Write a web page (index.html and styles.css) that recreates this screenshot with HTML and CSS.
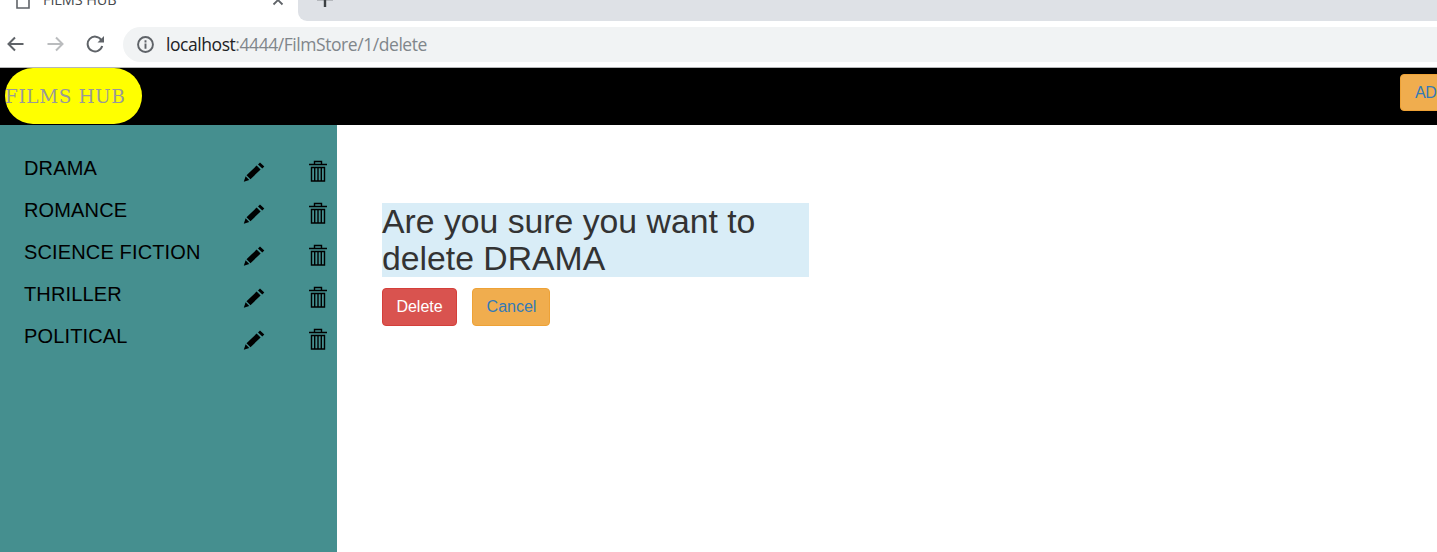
FILE: index.html
```html
<!DOCTYPE html>
<html lang="en">
<head>
<meta charset="utf-8">
<title>FILMS HUB</title>
<link rel="stylesheet" href="styles.css">
</head>
<body>
<svg class="defs" aria-hidden="true">
  <symbol id="pencil" viewBox="0 0 22 22">
    <path d="M.8 20.700l1.800-5.500 3.700 3.700zM3.500 14.200L13.600 4.600l4 4L7.500 18.200zM15 3.400l2-2 4.300 4-2 2z"/>
  </symbol>
  <symbol id="trash" viewBox="0 0 20 23">
    <path class="line" d="M6.500 4V1.500h7V4M1 4.500h18M3.500 7.500h13v13.500h-13zM6.700 7.500V21M10 7.500V21M13.300 7.500V21"/>
  </symbol>
</svg>
<header class="browser">
  <div class="tabs">
    <div class="tab">
      <svg class="page-icon" viewBox="0 0 14 16"><path d="M1 0v15h12V0"/></svg>
      <span class="tab-title">FILMS HUB</span>
      <svg class="close" viewBox="0 0 12 12"><path d="M1.500 1.500l9 9M10.500 1.500l-9 9"/></svg>
    </div>
    <div class="tab-strip"><svg class="plus" viewBox="0 0 16 16"><path d="M8 0v16M0 8h16"/></svg></div>
  </div>
  <div class="toolbar">
    <svg class="nav-icon" viewBox="0 0 18 18"><path d="M17.500 9H2.500M9 2.500L2.500 9l6.500 6.500"/></svg>
    <svg class="nav-icon forward" viewBox="0 0 18 18"><path d="M1.500 9h15M10 2.500l6.500 6.500-6.500 6.500"/></svg>
    <svg class="nav-icon reload" viewBox="0 0 18 18"><path d="M15.300 5A7.400 7.400 0 1 0 16.200 11"/><path class="solid" d="M18 1v6.500H11.500z"/></svg>
    <div class="address">
      <svg class="info" viewBox="0 0 16 16"><circle cx="8" cy="8" r="7"/><path d="M8 7v5M8 4v2"/></svg>
      <span class="url"><span class="host">localhost</span>:4444/FilmStore/1/delete</span>
    </div>
  </div>
</header>
<nav class="navbar">
  <a class="brand">FILMS HUB</a>
  <a class="btn btn-add">AD</a>
</nav>
<div class="layout">
  <aside class="sidebar">
    <div class="genre"><span>DRAMA</span><svg class="edit"><use href="#pencil"/></svg><svg class="remove"><use href="#trash"/></svg></div>
    <div class="genre"><span>ROMANCE</span><svg class="edit"><use href="#pencil"/></svg><svg class="remove"><use href="#trash"/></svg></div>
    <div class="genre"><span>SCIENCE FICTION</span><svg class="edit"><use href="#pencil"/></svg><svg class="remove"><use href="#trash"/></svg></div>
    <div class="genre"><span>THRILLER</span><svg class="edit"><use href="#pencil"/></svg><svg class="remove"><use href="#trash"/></svg></div>
    <div class="genre"><span>POLITICAL</span><svg class="edit"><use href="#pencil"/></svg><svg class="remove"><use href="#trash"/></svg></div>
  </aside>
  <main class="content">
    <h1 class="question">Are you sure you want to delete DRAMA</h1>
    <div class="actions">
      <button class="btn btn-delete">Delete</button>
      <a class="btn btn-cancel">Cancel</a>
    </div>
  </main>
</div>
</body>
</html>
```
FILE: styles.css
```css
* { box-sizing: border-box; }
body { margin: 0; height: 552px; overflow: hidden; display: flex; flex-direction: column; background: #fff; font-family: "Liberation Sans", Arial, sans-serif; }
svg { display: block; flex: none; }
.defs { display: none; }
.browser { height: 68px; flex: none; border-bottom: 1px solid #b5b6b8; font-family: "Open Sans", sans-serif; }
.tabs { display: flex; height: 21px; }
.tab { display: flex; width: 298px; padding-left: 16px; }
.page-icon { width: 14px; height: 16px; margin-top: -7px; fill: none; stroke: #5f6368; stroke-width: 1.6; }
.tab-title { width: 76px; margin: -11px 153px 0 13px; font-size: 14.500px; line-height: 21px; letter-spacing: -.1px; white-space: nowrap; color: #45484c; }
.close { width: 12px; height: 12px; margin-top: -6px; fill: none; stroke: #5f6368; stroke-width: 1.8; }
.tab-strip { flex: 1; padding-left: 19px; background: #dee1e6; border-bottom-left-radius: 9px; }
.plus { width: 16px; height: 16px; margin-top: -9px; stroke: #3c4043; stroke-width: 2.4; }
.toolbar { display: flex; align-items: center; height: 46px; padding-left: 6px; }
.nav-icon { width: 18px; height: 18px; margin-right: 22px; fill: none; stroke: #5f6368; stroke-width: 2; }
.forward { stroke: #babcbe; }
.reload { margin-right: 19px; }
.solid { fill: #5f6368; stroke: none; }
.address { display: flex; align-items: center; flex: 1; height: 35px; padding-left: 14px; background: #f1f3f4; border-radius: 18px 0 0 18px; }
.info { width: 17px; height: 17px; margin-right: 12px; fill: none; stroke: #5f6368; stroke-width: 1.8; }
.url { font-size: 17.500px; line-height: 24px; letter-spacing: -.440px; white-space: nowrap; color: #80868b; }
.host { color: #202124; }
.navbar { display: flex; flex: none; height: 57px; padding-left: 5px; background: #000; }
.brand { flex: none; width: 137px; height: 56px; border-radius: 28px; background: #ff0; color: #999; font: 18.500px/57px "DejaVu Serif", serif; letter-spacing: .58px; white-space: nowrap; }
.btn { display: block; flex: none; border: 1px solid; border-radius: 4px; padding: 0; font: 16px/35px "Liberation Sans", Arial, sans-serif; text-align: center; white-space: nowrap; }
.btn-add { width: 104px; height: 37px; margin: 6px 0 0 1258px; padding-left: 14px; text-align: left; letter-spacing: -.3px; background: #f0ad4e; border-color: #eea236; color: #337ab7; }
.layout { display: flex; flex: 1; }
.sidebar { width: 337px; padding: 27px 0 0 24px; background: #458f8f; }
.genre { display: flex; height: 42px; font-size: 20px; line-height: 32px; color: #000; }
.genre span { width: 219px; letter-spacing: .14px; }
.edit { width: 22px; height: 22px; margin: 9px 43px 0 0; }
.remove { width: 20px; height: 23px; margin-top: 8px; }
.line { fill: none; stroke: #000; stroke-width: 1.400; }
.content { padding: 78px 0 0 45px; }
.question { width: 427px; margin: 0 0 11px; background: #d9edf7; color: #333; font-size: 33.750px; font-weight: 400; line-height: 37px; }
.actions { display: flex; gap: 15px; }
.btn-delete { width: 75px; height: 38px; padding-bottom: 2px; background: #d9534f; border-color: #d43f3a; color: #fff; }
.btn-cancel { width: 78px; height: 38px; padding-left: 1px; background: #f0ad4e; border-color: #eea236; color: #337ab7; }
```
